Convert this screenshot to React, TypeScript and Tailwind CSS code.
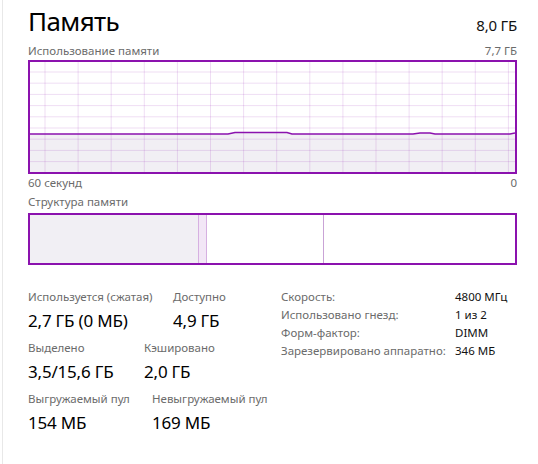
import React from "react";

const font = { fontFamily: '"Noto Sans", "Open Sans", sans-serif' };

function UsageGraph() {
  const cols = Array.from({ length: 15 }, (_, i) => 15 + i * 33.1);
  const rows = Array.from({ length: 9 }, (_, i) => 10 + i * 11.2);
  const line =
    "M0,72 L198,72 L205,70.5 L257,70.5 L262,72 L383,72 L390,71 L400,71 L405,72 L480,72 L485,71";
  return (
    <div className="h-[114px] w-[489px] border-2 border-[#8b12ae] bg-white">
      <svg width="485" height="110" viewBox="0 0 485 110" className="block">
        <path d={line + " L485,110 L0,110 Z"} fill="#f1eff4" />
        {cols.map((x) => (
          <line key={"c" + x} x1={x} y1={0} x2={x} y2={110} stroke="#8b12ae" strokeOpacity={0.14} strokeWidth={1} />
        ))}
        {rows.map((y) => (
          <line key={"r" + y} x1={0} y1={y} x2={485} y2={y} stroke="#8b12ae" strokeOpacity={0.14} strokeWidth={1} />
        ))}
        <path d={line} fill="none" stroke="#8b12ae" strokeWidth={1.6} />
      </svg>
    </div>
  );
}

function Stat({ label, value, w }: { label: string; value: string; w: string }) {
  return (
    <div className={w}>
      <div className="text-[11.5px] leading-[16px] text-[#6b6b6b]">{label}</div>
      <div className="text-[17px] leading-[32px] tracking-[-0.2px] text-black">{value}</div>
    </div>
  );
}

export default function App() {
  const props: [string, string][] = [
    ["Скорость:", "4800 МГц"],
    ["Использовано гнезд:", "1 из 2"],
    ["Форм-фактор:", "DIMM"],
    ["Зарезервировано аппаратно:", "346 МБ"],
  ];
  return (
    <div style={font} className="ml-[2px] h-[464px] w-[536px] border-l border-[#e8e8e8] bg-white pl-[25px]">
      <div className="flex h-[42px] w-[489px] items-baseline justify-between">
        <span className="text-[26px] leading-[42px] tracking-[-0.6px] text-black">Память</span>
        <span className="text-[15px] tracking-[-0.2px] text-[#111]">8,0 ГБ</span>
      </div>
      <div className="flex h-[18px] w-[489px] justify-between text-[11.5px] leading-[18px] text-[#6b6b6b]">
        <span>Использование памяти</span>
        <span>7,7 ГБ</span>
      </div>
      <UsageGraph />
      <div className="flex h-[18px] w-[489px] justify-between text-[11.5px] leading-[18px] text-[#6b6b6b]">
        <span>60 секунд</span>
        <span>0</span>
      </div>
      <div className="h-[21px] pt-[1px] text-[11.5px] leading-[18px] text-[#6b6b6b]">Структура памяти</div>
      <div className="flex h-[52px] w-[489px] border-2 border-[#8b12ae]">
        <div className="w-[168px] bg-[#f1eff4]" />
        <div className="w-[9px] border-x border-[#d6b0e1] bg-[#f2e6f6]" />
        <div className="w-[117px] border-r border-[#c9a3d6]" />
        <div className="flex-1" />
      </div>
      <div className="mt-[24px] flex">
        <div className="w-[253px]">
          <div className="flex">
            <Stat w="w-[145px]" label="Используется (сжатая)" value="2,7 ГБ (0 МБ)" />
            <Stat w="w-[100px]" label="Доступно" value="4,9 ГБ" />
          </div>
          <div className="mt-[3px] flex">
            <Stat w="w-[116px]" label="Выделено" value="3,5/15,6 ГБ" />
            <Stat w="w-[100px]" label="Кэшировано" value="2,0 ГБ" />
          </div>
          <div className="mt-[3px] flex">
            <Stat w="w-[124px]" label="Выгружаемый пул" value="154 МБ" />
            <Stat w="w-[125px]" label="Невыгружаемый пул" value="169 МБ" />
          </div>
        </div>
        <div className="-mt-[1px] text-[11.5px] leading-[18px]">
          {props.map(([k, v]) => (
            <div key={k} className="flex">
              <span className="w-[174px] text-[#6b6b6b]">{k}</span>
              <span className="text-[#111]">{v}</span>
            </div>
          ))}
        </div>
      </div>
    </div>
  );
}
